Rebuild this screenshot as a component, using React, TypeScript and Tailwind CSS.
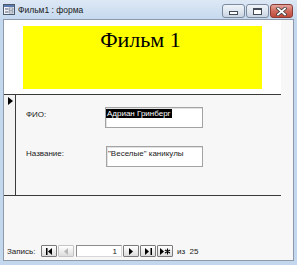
import React from 'react';

// Маленькая кнопка навигации по записям
function NavButton({ children, disabled }: { children: React.ReactNode; disabled?: boolean }) {
  return (
    <div
      className={`w-[16px] h-[12px] flex items-center justify-center border rounded-[1px] bg-gradient-to-b from-[#ffffff] to-[#dcdcdc] ${
        disabled ? 'border-[#c4c4c4]' : 'border-[#7a7a7a]'
      }`}
    >
      {children}
    </div>
  );
}

function TitleButton({ kind }: { kind: 'min' | 'max' | 'close' }) {
  const base = 'w-[23px] h-[14px] rounded-[3px] border flex items-center justify-center';
  if (kind === 'close') {
    return (
      <div className={`${base} border-[#8a3b33] bg-gradient-to-b from-[#e4a79e] via-[#cf6a5c] to-[#c04a3b]`}>
        <svg width="11" height="9" viewBox="0 0 11 9">
          <path d="M2 1.5 L9 7.5 M9 1.5 L2 7.5" stroke="#3d3d3d" strokeWidth="3.4" strokeLinecap="square" />
          <path d="M2 1.5 L9 7.5 M9 1.5 L2 7.5" stroke="#ffffff" strokeWidth="1.8" strokeLinecap="square" />
        </svg>
      </div>
    );
  }
  return (
    <div className={`${base} border-[#7d8ba0] bg-gradient-to-b from-[#f0f4f9] via-[#dfe6ef] to-[#c9d4e2]`}>
      {kind === 'min' ? (
        <div className="w-[9px] h-[4px] mt-[4px] bg-white border border-[#434b57]" />
      ) : (
        <div className="w-[9px] h-[7px] border border-t-[2px] border-[#434b57] bg-white" />
      )}
    </div>
  );
}

export default function App() {
  return (
    <div className="w-[297px] h-[265px] bg-[#c3d7ed] flex flex-col overflow-hidden font-['Liberation_Sans',sans-serif]">
      {/* Заголовок окна */}
      <div className="h-[19px] flex items-start bg-gradient-to-b from-[#dde8f5] to-[#c6d9ee]">
        <div className="flex items-center mt-[4px] ml-[3px]">
          <svg width="12" height="11" viewBox="0 0 12 11">
            <rect x="0.5" y="0.5" width="11" height="10" fill="#f4f6fa" stroke="#4c5a70" />
            <rect x="1" y="1" width="10" height="2" fill="#5b7bb0" />
            <rect x="2" y="4.5" width="3" height="1" fill="#4c5a70" />
            <rect x="6" y="4" width="4" height="2" fill="#ffffff" stroke="#4c5a70" strokeWidth="0.6" />
            <rect x="2" y="7.5" width="3" height="1" fill="#4c5a70" />
            <rect x="6" y="7" width="4" height="2" fill="#ffffff" stroke="#4c5a70" strokeWidth="0.6" />
          </svg>
          <span className="ml-[3px] text-[8.5px] leading-[10px] text-[#1a1a1a]">Фильм1 : форма</span>
        </div>
        <div className="ml-auto mr-[4px] mt-[4px] flex gap-[1px]">
          <TitleButton kind="min" />
          <TitleButton kind="max" />
          <TitleButton kind="close" />
        </div>
      </div>

      {/* Клиентская область */}
      <div className="flex-1 mx-[3px] mb-[4px] border border-[#8e9aab] bg-[#f7f7f7] flex flex-col">
        <div className="flex-1 flex flex-col">
          <div className="w-[277px] flex flex-col">
            {/* Заголовок формы */}
            <div className="h-[75px] bg-white border-b border-[#3a3a3a] pt-[6px] pl-[19px]">
              <div className="w-[239px] h-[63px] bg-[#ffff00] flex justify-center pt-[2px] pr-[4px]">
                <span className="font-['Liberation_Serif',serif] text-[22px] leading-[24px] text-black">Фильм 1</span>
              </div>
            </div>

            {/* Область данных */}
            <div className="h-[101px] flex border-b border-[#3a3a3a]">
              <div className="w-[12px] border-r border-[#3a3a3a] bg-[#f3f3f3] pt-[2px] pl-[4px]">
                <svg width="5" height="8" viewBox="0 0 5 8">
                  <path d="M0 0 L5 4 L0 8 Z" fill="#000000" />
                </svg>
              </div>
              <div className="flex-1 flex flex-col pt-[12px] pl-[10px] gap-[18px] text-[8px] text-[#1a1a1a]">
                <div className="flex items-start">
                  <span className="w-[79px] mt-[3px] leading-[10px]">ФИО:</span>
                  <div className="w-[98px] h-[21px] bg-white border border-[#a3a3a3] shadow-[inset_1px_1px_0_#e2e2e2]">
                    <span className="inline-block bg-black text-white leading-[9px] px-[1px]">Адриан Гринберг</span>
                  </div>
                </div>
                <div className="flex items-start">
                  <span className="w-[80px] mt-[3px] leading-[10px]">Название:</span>
                  <div className="w-[97px] h-[21px] bg-white border border-[#a3a3a3] shadow-[inset_1px_1px_0_#e2e2e2] pl-[1px] pt-[1px]">
                    <span className="leading-[9px]">"Веселые" каникулы</span>
                  </div>
                </div>
              </div>
            </div>
          </div>
        </div>

        {/* Навигация по записям */}
        <div className="h-[15px] flex items-start pl-[3px] text-[8px] text-[#1a1a1a]">
          <span className="mt-[2px] leading-[10px] w-[34px]">Запись:</span>
          <div className="flex gap-[1px]">
            <NavButton>
              <svg width="7" height="7" viewBox="0 0 7 7">
                <rect x="0" y="0" width="1.5" height="7" fill="#000" />
                <path d="M6 0 L2 3.5 L6 7 Z" fill="#000" />
              </svg>
            </NavButton>
            <NavButton disabled>
              <svg width="5" height="7" viewBox="0 0 5 7">
                <path d="M4 0 L0 3.5 L4 7 Z" fill="#b8b8b8" />
              </svg>
            </NavButton>
          </div>
          <div className="w-[46px] h-[12px] ml-[2px] mr-[1px] bg-white border border-[#8c8c8c] border-b-[#d8d8d8] border-r-[#d8d8d8] flex justify-end items-center pr-[4px] leading-[9px]">
            1
          </div>
          <div className="flex gap-[1px]">
            <NavButton>
              <svg width="5" height="7" viewBox="0 0 5 7">
                <path d="M0 0 L4 3.5 L0 7 Z" fill="#000" />
              </svg>
            </NavButton>
            <NavButton>
              <svg width="7" height="7" viewBox="0 0 7 7">
                <path d="M0 0 L4 3.5 L0 7 Z" fill="#000" />
                <rect x="5.5" y="0" width="1.5" height="7" fill="#000" />
              </svg>
            </NavButton>
            <NavButton>
              <svg width="11" height="7" viewBox="0 0 11 7">
                <path d="M0 0 L4 3.5 L0 7 Z" fill="#000" />
                <path d="M7.5 0.5 V6.5 M5 2 L10 5 M10 2 L5 5" stroke="#000" strokeWidth="1.1" />
              </svg>
            </NavButton>
          </div>
          <span className="ml-[4px] mt-[2px] leading-[10px]">из&nbsp;&nbsp;25</span>
        </div>
      </div>
    </div>
  );
}
